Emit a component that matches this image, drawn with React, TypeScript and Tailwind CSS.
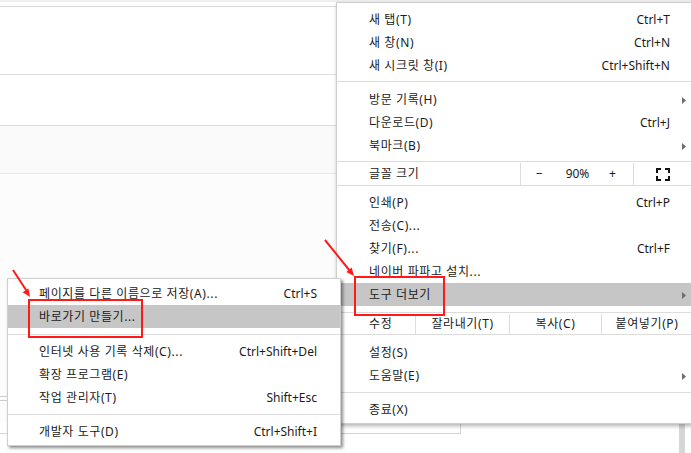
import type { ReactNode } from "react";

type Item = {
  label: string;
  shortcut?: string;
  submenu?: boolean;
  active?: boolean;
};

const font = { fontFamily: '"Noto Sans", "Noto Sans CJK KR", sans-serif' };

const Arrow = () => (
  <svg width="4" height="7" viewBox="0 0 4 7">
    <polygon points="0,0 4,3.5 0,7" fill="#6e6e6e" />
  </svg>
);

const MainRow = ({ label, shortcut, submenu, active }: Item) => (
  <div
    className={
      "flex h-[23px] items-center pt-px pl-[32px] pr-[6px] " +
      (active ? "bg-[#c6c6c6]" : "")
    }
  >
    <span className="flex-1 whitespace-nowrap tracking-[0.6px]">{label}</span>
    {shortcut && <span className="whitespace-nowrap">{shortcut}</span>}
    <span className="flex w-[16px] justify-end">{submenu && <Arrow />}</span>
  </div>
);

const SubRow = ({ label, shortcut, active }: Item) => (
  <div
    className={
      "flex h-[23px] items-center pt-px pl-[31px] pr-[23px] " +
      (active ? "bg-[#c6c6c6]" : "")
    }
  >
    <span className="flex-1 whitespace-nowrap tracking-[0.6px]">{label}</span>
    {shortcut && <span className="whitespace-nowrap">{shortcut}</span>}
  </div>
);

const Group = ({ children }: { children: ReactNode }) => <div>{children}</div>;

const FullscreenIcon = () => (
  <svg width="14" height="13" viewBox="0 0 14 13" fill="none" stroke="#111" strokeWidth="2">
    <path d="M1 5V1h4M9 1h4v4M13 8v4H9M5 12H1V8" />
  </svg>
);

function MainMenu() {
  return (
    <div className="absolute left-[336px] top-[2px] w-[357px] border border-[#cfcfcf] bg-white pt-[5px] pb-[2px] text-[12px] text-[#1b1b1b] shadow-[1px_2px_4px_rgba(0,0,0,0.3)]">
      <Group>
        <MainRow label="새 탭(T)" shortcut="Ctrl+T" />
        <MainRow label="새 창(N)" shortcut="Ctrl+N" />
        <MainRow label="새 시크릿 창(I)" shortcut="Ctrl+Shift+N" />
      </Group>
      <div className="mt-[4px] mb-[6px] h-px bg-[#dcdcdc]" />
      <Group>
        <MainRow label="방문 기록(H)" submenu />
        <MainRow label="다운로드(D)" shortcut="Ctrl+J" />
        <MainRow label="북마크(B)" submenu />
      </Group>
      <div className="mt-[4px] flex h-[25px] border-y border-[#dcdcdc] pt-px">
        <div className="flex flex-1 items-center pl-[32px] tracking-[0.6px]">글꼴 크기</div>
        <div className="flex w-[113px] items-center border-l border-[#dcdcdc]">
          <span className="w-[37px] text-center">−</span>
          <span className="w-[39px] text-center">90%</span>
          <span className="w-[31px] text-center">+</span>
        </div>
        <div className="flex w-[59px] items-center justify-center border-l border-[#dcdcdc]">
          <FullscreenIcon />
        </div>
      </div>
      <div className="mt-[5px]">
        <MainRow label="인쇄(P)" shortcut="Ctrl+P" />
        <MainRow label="전송(C)..." />
        <MainRow label="찾기(F)..." shortcut="Ctrl+F" />
        <MainRow label="네이버 파파고 설치..." />
        <MainRow label="도구 더보기" submenu active />
      </div>
      <div className="mt-[6px] flex h-[23px] border-y border-[#dcdcdc] pt-px tracking-[0.6px]">
        <div className="flex w-[78px] items-center pl-[32px]">수정</div>
        <div className="flex w-[94px] items-center justify-center border-l border-[#dcdcdc]">잘라내기(T)</div>
        <div className="flex w-[92px] items-center justify-center border-l border-[#dcdcdc]">복사(C)</div>
        <div className="flex flex-1 items-center justify-center border-l border-[#dcdcdc]">붙여넣기(P)</div>
      </div>
      <div className="mt-[6px]">
        <MainRow label="설정(S)" />
        <MainRow label="도움말(E)" submenu />
      </div>
      <div className="mt-[5px] mb-[5px] h-px bg-[#dcdcdc]" />
      <MainRow label="종료(X)" />
    </div>
  );
}

function ToolsMenu() {
  return (
    <div className="absolute left-[7px] top-[278px] w-[334px] border border-[#cfcfcf] bg-white pt-[3px] pb-[2px] text-[12px] text-[#1b1b1b] shadow-[2px_2px_3px_rgba(0,0,0,0.45)]">
      <SubRow label="페이지를 다른 이름으로 저장(A)..." shortcut="Ctrl+S" />
      <SubRow label="바로가기 만들기..." active />
      <div className="mt-[6px] mb-[5px] h-px bg-[#dcdcdc]" />
      <SubRow label="인터넷 사용 기록 삭제(C)..." shortcut="Ctrl+Shift+Del" />
      <SubRow label="확장 프로그램(E)" />
      <SubRow label="작업 관리자(T)" shortcut="Shift+Esc" />
      <div className="mt-[5px] mb-[5px] h-px bg-[#dcdcdc]" />
      <SubRow label="개발자 도구(D)" shortcut="Ctrl+Shift+I" />
    </div>
  );
}

function Annotations() {
  return (
    <svg className="pointer-events-none absolute inset-0" width="691" height="453">
      <g stroke="#ff1a1a" strokeWidth="2" fill="none">
        <rect x="355" y="277" width="89" height="38" />
        <rect x="29" y="300" width="113" height="37" />
        <line x1="325" y1="240" x2="350" y2="271" />
        <line x1="13" y1="270" x2="28" y2="293" />
      </g>
      <g fill="#ff1a1a">
        <polygon points="354,276 346.3,271.9 351.7,267.6" />
        <polygon points="30,297 22.7,292.2 28.5,288.4" />
      </g>
    </svg>
  );
}

export default function App() {
  return (
    <div className="relative h-[453px] w-[691px] overflow-hidden bg-white" style={font}>
      <div className="h-[2px] bg-[#efefef]" />
      <div className="h-[4px]" />
      <div className="h-[68px] border-t border-[#d9d9d9]" />
      <div className="h-[51px] border-t border-[#dedede]" />
      <div className="h-[48px] border-t border-[#dcdcdc] bg-[#fafafa]" />
      <div className="flex h-[280px] flex-col border-t border-[#e8e8e8] bg-[#fcfcfc]">
        <div className="h-[222px]" />
        <div className="h-px w-[7px] bg-[#cfcfcf]" />
        <div className="h-[3px]" />
        <div className="h-px w-[7px] bg-[#cfcfcf]" />
        <div className="h-[22px]" />
        <div className="flex flex-1 bg-white">
          <div className="h-[11px] w-[461px] border-r border-b border-[#d4d4d4]" />
          <div className="flex-1" />
          <div className="mr-[6px] w-[6px] bg-[#d6d6d6]" />
        </div>
      </div>
      <MainMenu />
      <ToolsMenu />
      <Annotations />
    </div>
  );
}
